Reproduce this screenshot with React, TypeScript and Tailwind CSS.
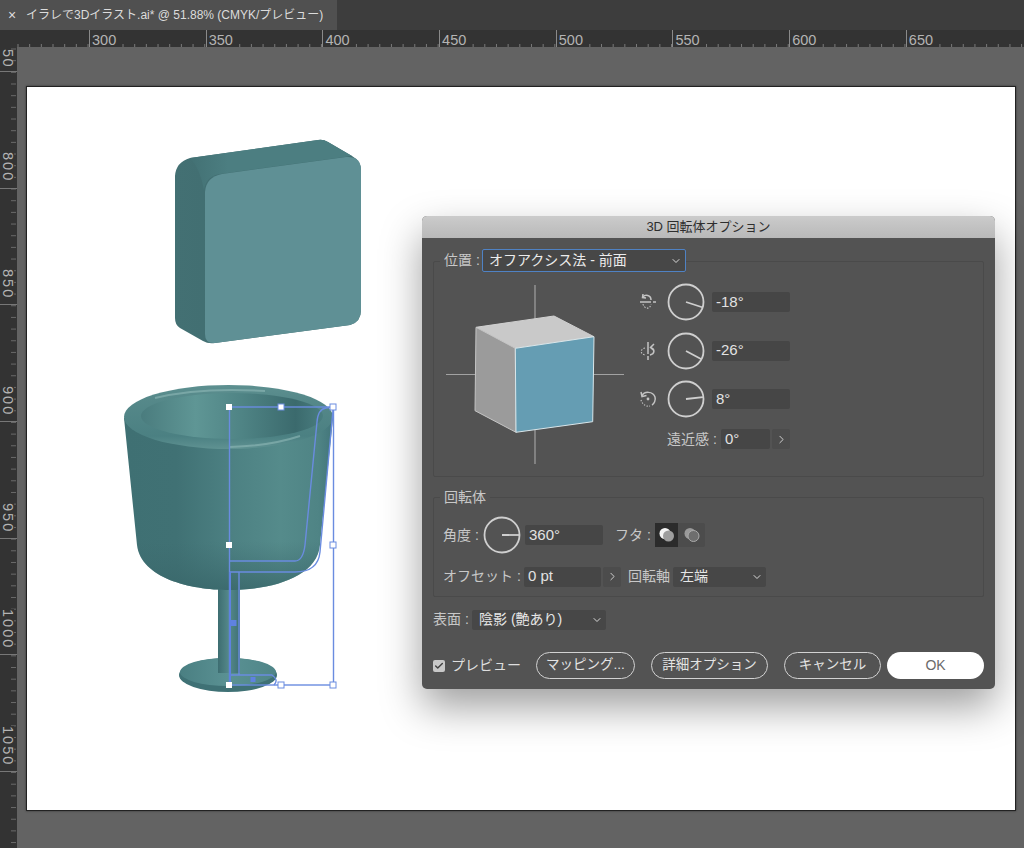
import React from "react";
import { ChevronDown, ChevronRight, Check } from "lucide-react";

const FONT = "font-['Liberation_Sans','Noto_Sans_CJK_JP',sans-serif]";

const TOP_LABELS = ["300", "350", "400", "450", "500", "550", "600", "650"];
const SIDE_LABELS = ["800", "850", "900", "950", "1000", "1050"];

function RulerTicks({ vertical }: { vertical?: boolean }) {
  const ticks = Array.from({ length: 90 }, (_, i) => i * 11.67);
  if (vertical) {
    return (
      <svg className="absolute inset-0 h-full w-full">
        {ticks.map((t) => (
          <line key={t} x1="11" x2="16" y1={2 + t} y2={2 + t} stroke="#6a6a6a" />
        ))}
      </svg>
    );
  }
  return (
    <svg className="absolute inset-0 h-full w-full">
      {ticks.map((t) => (
        <line key={t} x1={18 + t} x2={18 + t} y1="14" y2="17" stroke="#7a7a7a" />
      ))}
    </svg>
  );
}

function TopRuler() {
  return (
    <div className="relative flex h-[17px] shrink-0 overflow-hidden bg-[#333333]">
      <RulerTicks />
      <div className="w-[89px] shrink-0" />
      {TOP_LABELS.map((n) => (
        <div key={n} className="relative h-full w-[116.7px] shrink-0 border-l border-[#8a8a8a] pl-[1px]">
          <div className="h-full w-[31px] bg-[#333333] pl-[1px] text-[14.5px] leading-[21px] text-[#b4b4b4]">{n}</div>
        </div>
      ))}
    </div>
  );
}

function SideLabel({ n }: { n: string }) {
  return (
    <div className="relative flex h-[116.7px] shrink-0 flex-col items-start justify-end border-b border-[#777777] pb-[5px]">
      <span className="bg-[#333333] pl-[1px] text-[14.5px] leading-[13px] tracking-[2px] text-[#b4b4b4] [writing-mode:vertical-rl]">
        {n}
      </span>
    </div>
  );
}

function SideRuler() {
  return (
    <div className="relative w-[17px] shrink-0 overflow-hidden bg-[#333333]">
      <RulerTicks vertical />
      <div className="relative flex h-[25px] shrink-0 flex-col items-start justify-end border-b border-[#777777] pb-[3px]">
        <span className="pl-[1px] text-[14.5px] leading-[13px] tracking-[1.5px] text-[#b4b4b4] [writing-mode:vertical-rl]">50</span>
      </div>
      {SIDE_LABELS.map((n) => (
        <SideLabel key={n} n={n} />
      ))}
    </div>
  );
}

function Illustration() {
  return (
    <svg viewBox="27 87 988 723" className="absolute inset-0 h-full w-full">
      <defs>
        <linearGradient id="cup" x1="0" x2="1" y1="0" y2="0">
          <stop offset="0" stopColor="#3f7073" />
          <stop offset="0.25" stopColor="#407174" />
          <stop offset="0.5" stopColor="#4c8082" />
          <stop offset="0.75" stopColor="#558b8b" />
          <stop offset="0.93" stopColor="#4f8485" />
          <stop offset="1" stopColor="#42757a" />
        </linearGradient>
        <linearGradient id="cupBottom" x1="0" x2="0" y1="0" y2="1">
          <stop offset="0.72" stopColor="#3c6a6e" stopOpacity="0" />
          <stop offset="1" stopColor="#386669" stopOpacity="0.8" />
        </linearGradient>
        <linearGradient id="inner" x1="0" x2="1" y1="0" y2="0">
          <stop offset="0" stopColor="#4a7c7e" />
          <stop offset="0.3" stopColor="#5f9695" />
          <stop offset="0.55" stopColor="#4f8485" />
          <stop offset="0.85" stopColor="#3b6a6d" />
          <stop offset="1" stopColor="#4a7e80" />
        </linearGradient>
        <linearGradient id="rim" x1="0" x2="0" y1="0" y2="1">
          <stop offset="0" stopColor="#5d9090" />
          <stop offset="0.2" stopColor="#56898a" />
          <stop offset="0.8" stopColor="#4b8082" />
          <stop offset="1" stopColor="#5f9292" />
        </linearGradient>
        <linearGradient id="stem" x1="0" x2="1" y1="0" y2="0">
          <stop offset="0" stopColor="#3d6d71" />
          <stop offset="0.5" stopColor="#55898b" />
          <stop offset="1" stopColor="#3f7074" />
        </linearGradient>
        <linearGradient id="base" x1="0" x2="1" y1="0" y2="0">
          <stop offset="0" stopColor="#4a7f82" />
          <stop offset="0.5" stopColor="#5a9193" />
          <stop offset="1" stopColor="#4f8588" />
        </linearGradient>
        <linearGradient id="boxSide" x1="0" x2="1" y1="0" y2="0">
          <stop offset="0" stopColor="#437073" />
          <stop offset="1" stopColor="#3d696c" />
        </linearGradient>
        <linearGradient id="boxTop" gradientUnits="userSpaceOnUse" x1="188" x2="228" y1="0" y2="0">
          <stop offset="0" stopColor="#427073" />
          <stop offset="1" stopColor="#4c7e81" />
        </linearGradient>
      </defs>

      {/* box */}
      <path d="M175 176 Q176 162 190 158 L318 140 Q323 139 328 142 L352 156 Q361 161 361 170 L361 310 Q361 322 350 325 L215 343 Q208 344 203 341 L180 328 Q175 325 175 318 Z" fill="url(#boxSide)" />
      <path d="M190 158 L318 140 Q323 139 328 142 L352 156 L220 174 Q206 176 204 190 Q200 168 190 158 Z" fill="url(#boxTop)" />
      <path d="M205 192 Q206 177 222 174 L346 157 Q361 156 361 170 L361 310 Q361 322 350 325 L215 343 Q205 344 205 334 Z" fill="#5f9095" />

      {/* base and stem */}
      <ellipse cx="228" cy="675" rx="49" ry="17" fill="#3f7175" />
      <ellipse cx="228" cy="672" rx="48" ry="14" fill="url(#base)" />
      <rect x="218" y="585" width="22" height="88" fill="url(#stem)" />

      {/* cup */}
      <path d="M124 418 L137 545 C141 578 190 590 229 590 C270 590 317 578 320 545 L333 418 Z" fill="url(#cup)" />
      <path d="M124 418 L137 545 C141 578 190 590 229 590 C270 590 317 578 320 545 L333 418 Z" fill="url(#cupBottom)" />
      <ellipse cx="228.5" cy="417" rx="104.5" ry="32" fill="url(#rim)" />
      <ellipse cx="232" cy="416" rx="91" ry="23" fill="url(#inner)" />
      <path d="M155 398 Q200 387 265 391" stroke="#8fb9b8" strokeWidth="2" fill="none" opacity="0.6" />
      <path d="M230 447 Q270 446 300 436" stroke="#8fb9b8" strokeWidth="2" fill="none" opacity="0.6" />

      {/* selection */}
      <g fill="none" stroke="#6a8ce0" strokeWidth="1.4">
        <rect x="229.5" y="407" width="104" height="278" />
        <path d="M229 561 L295 561 Q303 561 305 545 L317 422 Q318 409 326 408 L333 407" />
        <path d="M229 572 L295 572 Q318 572 320 552 L333 410" />
        <line x1="239" x2="239" y1="572" y2="675" />
        <path d="M229 675 L272 675 Q279 680 274 685" />
      </g>
      <rect x="229" y="572" width="2" height="112" fill="#5f82e0" />
      <rect x="230.5" y="620" width="6" height="6" fill="#5f82e0" />
      <rect x="250.5" y="677" width="5" height="5" fill="#5f82e0" />
      {[[229, 407], [229, 545], [229, 685]].map(([x, y]) => (
        <rect key={`${x}-${y}`} x={x - 3} y={y - 3} width="6" height="6" fill="#ffffff" />
      ))}
      {[[281, 407], [333, 407], [333, 545], [281, 685], [333, 685]].map(([x, y]) => (
        <rect key={`${x}-${y}`} x={x - 3} y={y - 3} width="6" height="6" fill="#ffffff" stroke="#6a8ce0" />
      ))}
    </svg>
  );
}

function Dial({ angle }: { angle: number }) {
  const r = (angle * Math.PI) / 180;
  const x = 19 + Math.cos(r) * 17;
  const y = 19 + Math.sin(r) * 17;
  return (
    <svg width="38" height="38" viewBox="0 0 38 38" className="shrink-0">
      <circle cx="19" cy="19" r="17.5" fill="none" stroke="#cfcfcf" strokeWidth="1.8" />
      <line x1="19" y1="19" x2={x} y2={y} stroke="#cfcfcf" strokeWidth="1.8" />
    </svg>
  );
}

function AxisIcon({ kind }: { kind: "x" | "y" | "z" }) {
  return (
    <svg width="20" height="20" viewBox="0 0 20 20" fill="none" stroke="#c4c4c4" strokeWidth="1.5" className="shrink-0">
      {kind === "x" && (
        <>
          <path d="M2 10 H13 M15 10 H18" />
          <path d="M13 8 C13 3 7 2 5 5" />
          <path d="M5 2 L4.5 5.5 L8 6" />
          <path d="M5 12 C6 17 12 18 13 12" strokeDasharray="1.5 1.5" strokeWidth="1.1" />
        </>
      )}
      {kind === "y" && (
        <>
          <path d="M10 1 V13 M10 15 V19" />
          <path d="M13 7 C17 8 17 13 12 14" />
          <path d="M16 3 L12.5 6.5 L15.5 9" />
          <path d="M7 7 C2 8 2 13 7 14" strokeDasharray="1.5 1.5" strokeWidth="1.1" />
        </>
      )}
      {kind === "z" && (
        <>
          <path d="M4 7 C6 2 15 2 17 8 C18 11 16 15 14 16" />
          <path d="M3 3 L4 7.5 L8.5 6.5" />
          <path d="M3 11 C4 15 8 18 12 17" strokeDasharray="1.3 1.5" strokeWidth="1.1" />
          <circle cx="10" cy="10" r="1.4" fill="#c4c4c4" stroke="none" />
        </>
      )}
    </svg>
  );
}

function Field({ value, className }: { value: string; className: string }) {
  return (
    <div className={`flex h-[20px] items-center rounded-[2px] bg-[#464646] pl-[4px] text-[15px] text-[#e2e2e2] ${className}`}>
      {value}
    </div>
  );
}

function RotationRow({ kind, angle, value }: { kind: "x" | "y" | "z"; angle: number; value: string }) {
  return (
    <div className="flex h-[38px] items-center">
      <AxisIcon kind={kind} />
      <div className="ml-[9px]">
        <Dial angle={angle} />
      </div>
      <Field value={value} className="ml-[7px] w-[78px]" />
    </div>
  );
}

function StepArrow() {
  return (
    <div className="flex h-[20px] w-[18px] items-center justify-center rounded-[2px] bg-[#4c4c4c]">
      <ChevronRight size={13} color="#d0d0d0" strokeWidth={1.8} />
    </div>
  );
}

function Select({ value, className }: { value: string; className: string }) {
  return (
    <div className={`flex h-[20px] items-center justify-between rounded-[2px] bg-[#474747] pl-[7px] pr-[3px] text-[14px] text-[#e6e6e6] ${className}`}>
      <span>{value}</span>
      <ChevronDown size={12} color="#d8d8d8" strokeWidth={2} />
    </div>
  );
}

function PillButton({ label, className }: { label: string; className: string }) {
  return (
    <div className={`flex h-[27px] items-center justify-center rounded-full border border-[#d2d2d2] text-[13.5px] text-[#e4e4e4] ${className}`}>
      {label}
    </div>
  );
}

function CapIcon({ open }: { open?: boolean }) {
  return (
    <svg width="18" height="18" viewBox="0 0 18 18">
      <circle cx="7" cy="7.5" r="5.5" fill={open ? "#9a9a9a" : "#f4f4f4"} />
      <circle cx="10.5" cy="10" r="5.5" fill={open ? "#6e6e6e" : "#9e9e9e"} stroke={open ? "#aaaaaa" : "none"} />
    </svg>
  );
}

function PreviewCube() {
  return (
    <svg width="180" height="180" viewBox="445 285 180 180" className="shrink-0">
      <g stroke="#a2a2a2" strokeWidth="1.2">
        <line x1="535" x2="535" y1="285" y2="464" />
        <line x1="446" x2="624" y1="374.5" y2="374.5" />
      </g>
      <g stroke="#d9e6ea" strokeWidth="1" strokeLinejoin="round">
        <polygon points="476,327.3 554,316 594,336.7 515.3,348.3" fill="#c9c9c9" stroke="#d0d0d0" />
        <polygon points="476,327.3 515.3,348.3 516,432.3 475,410.7" fill="#9b9b9b" stroke="#c4c4c4" />
        <polygon points="515.3,348.3 594,336.7 592.7,421.7 516,432.3" fill="#659db3" />
      </g>
    </svg>
  );
}

function Dialog() {
  return (
    <div className={`absolute left-[422px] top-[216px] flex h-[473px] w-[573px] flex-col overflow-hidden rounded-[5px] bg-[#535353] text-[14px] text-[#c8c8c8] shadow-[0_18px_40px_rgba(0,0,0,0.38)] ${FONT}`}>
      <div className="flex h-[22px] shrink-0 items-center justify-center bg-gradient-to-b from-[#cbcbcb] to-[#b9b9b9] text-[13px] text-[#2e2e2e]">
        3D 回転体オプション
      </div>

      <div className="flex flex-1 flex-col px-[11px]">
        {/* position */}
        <div className="mt-[23px] h-[216px] rounded-[2px] border border-[#4a4a4a]">
          <div className="-mt-[13px] ml-[6px] flex w-fit items-center bg-[#535353] pl-[4px]">
            <span className="w-[38px] leading-[23px]">位置 :</span>
            <div className="flex h-[23px] w-[204px] items-center justify-between rounded-[2px] border border-[#4f82c4] bg-[#474747] pl-[6px] pr-[3px] text-[14px] text-[#ececec]">
              <span>オフアクシス法 - 前面</span>
              <ChevronDown size={12} color="#d8d8d8" strokeWidth={2} />
            </div>
          </div>
          <div className="ml-[11px] mt-[13px] flex">
            <PreviewCube />
            <div className="-mt-[2px] ml-[13px] flex flex-col">
              <div className="flex flex-col gap-[10.5px]">
                <RotationRow kind="x" angle={18} value="-18°" />
                <RotationRow kind="y" angle={28} value="-26°" />
                <RotationRow kind="z" angle={-6} value="8°" />
              </div>
              <div className="mt-[10.5px] flex items-center pl-[29px]">
                <span className="w-[54px] whitespace-nowrap">遠近感 :</span>
                <Field value="0°" className="w-[49px]" />
                <div className="ml-[2px]">
                  <StepArrow />
                </div>
              </div>
            </div>
          </div>
        </div>

        {/* revolve */}
        <div className="mt-[20px] h-[100px] rounded-[2px] border border-[#4a4a4a]">
          <div className="-mt-[10px] ml-[6px] w-fit bg-[#535353] px-[4px] leading-[18px]">回転体</div>
          <div className="mt-[10px] flex items-center pl-[9px]">
            <span className="w-[40px] whitespace-nowrap">角度 :</span>
            <Dial angle={0} />
            <Field value="360°" className="ml-[4px] w-[78px]" />
            <span className="ml-[12px] w-[40px] whitespace-nowrap">フタ :</span>
            <div className="flex h-[24px] w-[50px] rounded-[2px] bg-[#4c4c4c]">
              <div className="flex w-[23px] items-center justify-center bg-[#2b2b2b]">
                <CapIcon />
              </div>
              <div className="flex flex-1 items-center justify-center">
                <CapIcon open />
              </div>
            </div>
          </div>
          <div className="mt-[12px] flex items-center pl-[9px]">
            <span className="w-[81px] whitespace-nowrap">オフセット :</span>
            <Field value="0 pt" className="w-[77px]" />
            <div className="ml-[2px]">
              <StepArrow />
            </div>
            <span className="ml-[7px] w-[45px] whitespace-nowrap">回転軸</span>
            <Select value="左端" className="w-[93px]" />
          </div>
        </div>

        <div className="mt-[12px] flex items-center">
          <span className="w-[39px] whitespace-nowrap">表面 :</span>
          <Select value="陰影 (艶あり)" className="w-[134px]" />
        </div>

        <div className="mt-[22px] flex items-center">
          <div className="flex h-[12px] w-[12px] items-center justify-center rounded-[2px] bg-[#c8c8c8]">
            <Check size={10} color="#444444" strokeWidth={3.5} />
          </div>
          <span className="ml-[6px] w-[85px] whitespace-nowrap text-[#dedede]">プレビュー</span>
          <PillButton label="マッピング..." className="w-[99px]" />
          <PillButton label="詳細オプション" className="ml-[16px] w-[117px]" />
          <PillButton label="キャンセル" className="ml-[16px] w-[97px]" />
          <div className="ml-[6px] flex h-[27px] w-[97px] items-center justify-center rounded-full bg-white text-[14px] text-[#6a6a6a]">
            OK
          </div>
        </div>
      </div>
    </div>
  );
}

export default function App() {
  return (
    <div className={`relative flex h-[848px] w-[1024px] flex-col overflow-hidden bg-[#636363] ${FONT}`}>
      <div className="flex h-[30px] shrink-0 bg-[#3d3d3d]">
        <div className="flex w-[337px] items-center bg-[#505050] pl-[8px] text-[12px] text-[#dcdcdc]">
          <span className="w-[18px] shrink-0 text-[14px]">×</span>
          <span className="whitespace-nowrap">イラレで3Dイラスト.ai* @ 51.88% (CMYK/プレビュー)</span>
        </div>
      </div>
      <TopRuler />
      <div className="flex min-h-0 flex-1">
        <SideRuler />
        <div className="min-w-0 flex-1 pb-[37px] pl-[9px] pr-[8px] pt-[39px]">
          <div className="relative h-full w-full border border-[#222222] bg-white shadow-[0_0_2px_rgba(0,0,0,0.5)]">
            <Illustration />
          </div>
        </div>
      </div>
      <Dialog />
    </div>
  );
}
